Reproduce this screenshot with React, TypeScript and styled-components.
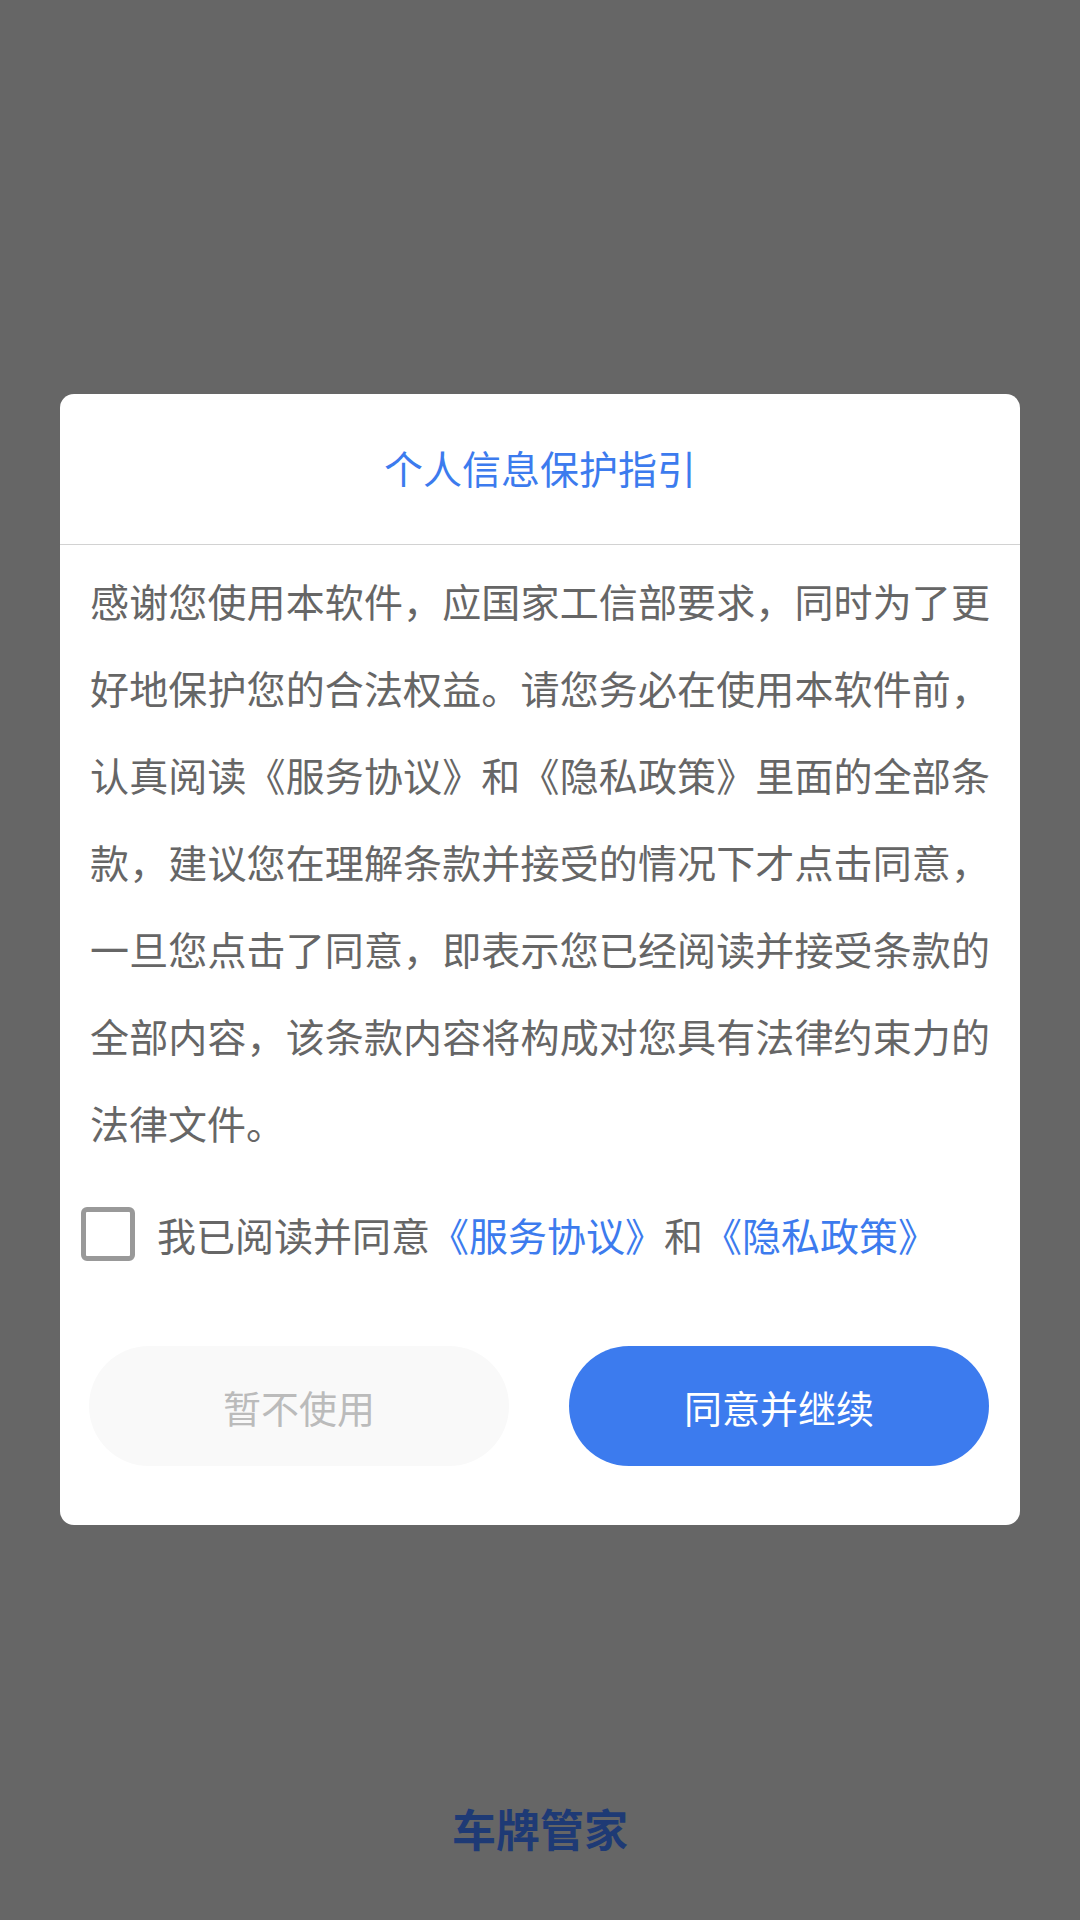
import styled, { createGlobalStyle } from 'styled-components';
import { useState } from 'react';

const GlobalStyle = createGlobalStyle`
	* {
		box-sizing: border-box;
	}
	body {
		margin: 0;
		background: #666666;
		font-family: 'Noto Sans CJK SC', 'Noto Sans', sans-serif;
	}
`;

const paragraph =
	'感谢您使用本软件，应国家工信部要求，同时为了更好地保护您的合法权益。请您务必在使用本软件前，认真阅读《服务协议》和《隐私政策》里面的全部条款，建议您在理解条款并接受的情况下才点击同意，一旦您点击了同意，即表示您已经阅读并接受条款的全部内容，该条款内容将构成对您具有法律约束力的法律文件。';

export default function App() {
	const [checked, setChecked] = useState(false);

	return (
		<>
			<GlobalStyle />
			<Page>
				<Dialog>
					<Header>
						<Title>个人信息保护指引</Title>
					</Header>
					<Body>{paragraph}</Body>
					<AgreeRow onClick={() => setChecked(!checked)}>
						<Checkbox checked={checked} />
						<AgreeText>
							我已阅读并同意<Link>《服务协议》</Link>和<Link>《隐私政策》</Link>
						</AgreeText>
					</AgreeRow>
					<Actions>
						<ActionButton primary={false}>暂不使用</ActionButton>
						<ActionButton primary>同意并继续</ActionButton>
					</Actions>
				</Dialog>
				<Brand>车牌管家</Brand>
			</Page>
		</>
	);
}

const Page = styled.div`
	min-height: 1920px;
	display: flex;
	flex-direction: column;
	align-items: center;
	padding-top: 394px;
	padding-bottom: 70px;
`;

const Dialog = styled.section`
	width: 960px;
	background: #ffffff;
	border-radius: 14px;
	padding-bottom: 59px;
`;

const Header = styled.header`
	height: 151px;
	display: flex;
	align-items: center;
	justify-content: center;
	border-bottom: 1px solid #d2d2d2;
`;

const Title = styled.h1`
	margin: 0 0 4px;
	font-size: 39px;
	font-weight: 400;
	color: #3c7bee;
	line-height: 1;
`;

const Body = styled.p`
	margin: 0;
	padding: 12px 30px 0;
	font-size: 39px;
	line-height: 87px;
	color: #666666;
	text-align: justify;
`;

const AgreeRow = styled.div`
	display: flex;
	align-items: center;
	gap: 22px;
	margin-top: 41px;
	padding-left: 21px;
	cursor: pointer;
`;

const Checkbox = styled.span<{ checked: boolean }>`
	width: 54px;
	height: 54px;
	flex-shrink: 0;
	border: 5px solid #999999;
	border-radius: 6px;
	background: ${({ checked }) => (checked ? '#3c7bee' : '#ffffff')};
`;

const AgreeText = styled.span`
	font-size: 39px;
	line-height: 54px;
	color: #666666;
	white-space: nowrap;
	text-spacing-trim: space-all;
`;

const Link = styled.span`
	color: #3c7bee;
`;

const Actions = styled.div`
	display: flex;
	gap: 60px;
	padding: 0 31px 0 29px;
	margin-top: 85px;
`;

const ActionButton = styled.button<{ primary: boolean }>`
	flex: 1;
	height: 120px;
	border: 0;
	outline: 0;
	border-radius: 60px;
	font-family: inherit;
	font-size: 38px;
	cursor: pointer;
	background: ${({ primary }) => (primary ? '#3c7bee' : '#f9f9f9')};
	color: ${({ primary }) => (primary ? '#ffffff' : '#bbbbbb')};
`;

const Brand = styled.div`
	margin-top: auto;
	font-size: 44px;
	font-weight: 700;
	line-height: 44px;
	color: #1e3a75;
`;
